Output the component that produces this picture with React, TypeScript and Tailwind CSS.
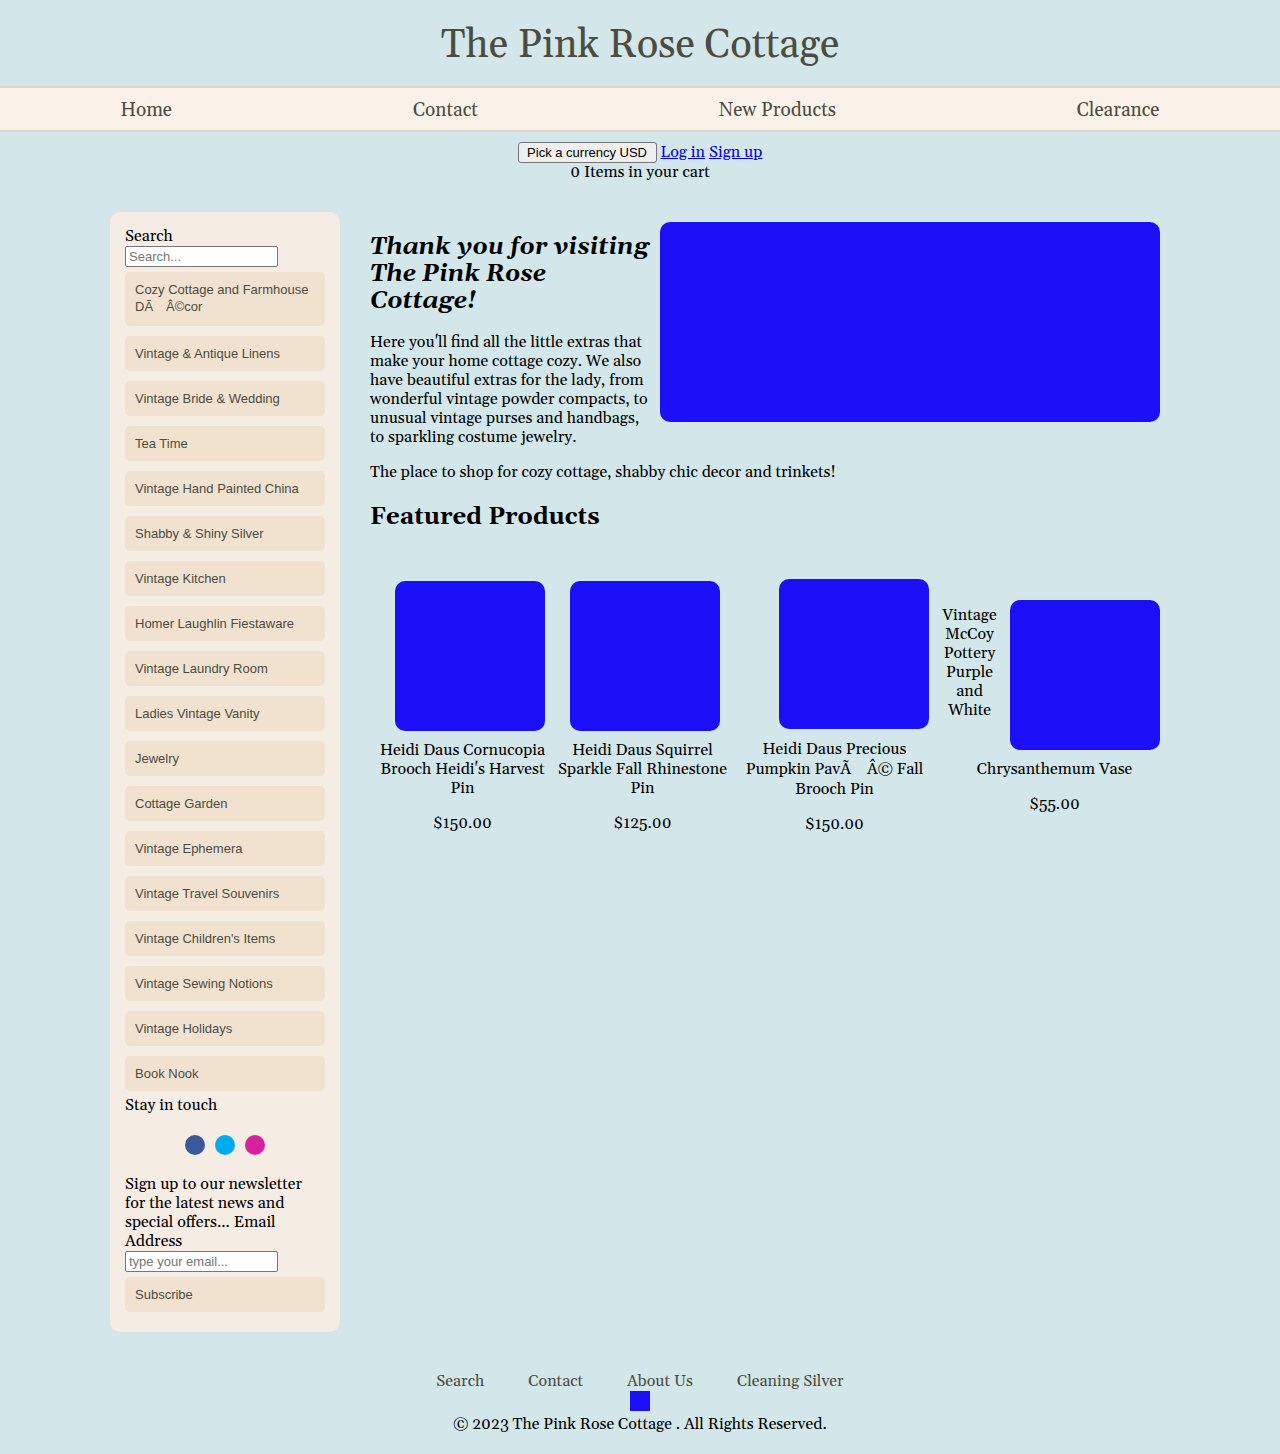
const navLinks = ["Home", "Contact", "New Products", "Clearance"];

const categories = [
  "Cozy Cottage and Farmhouse DÃ\u2003Â©cor",
  "Vintage & Antique Linens",
  "Vintage Bride & Wedding",
  "Tea Time",
  "Vintage Hand Painted China",
  "Shabby & Shiny Silver",
  "Vintage Kitchen",
  "Homer Laughlin Fiestaware",
  "Vintage Laundry Room",
  "Ladies Vintage Vanity",
  "Jewelry",
  "Cottage Garden",
  "Vintage Ephemera",
  "Vintage Travel Souvenirs",
  "Vintage Children's Items",
  "Vintage Sewing Notions",
  "Vintage Holidays",
  "Book Nook",
];

const socials = [
  { name: "Facebook", color: "bg-[#3b5998]" },
  { name: "Twitter", color: "bg-[#00acee]" },
  { name: "Instagram", color: "bg-[#d9219d]" },
];

const products = [
  {
    name: "Heidi Daus Cornucopia Brooch Heidi's Harvest Pin",
    price: "$150.00",
    leading: "leading-[19px]",
  },
  {
    name: "Heidi Daus Squirrel Sparkle Fall Rhinestone Pin",
    price: "$125.00",
    leading: "leading-[19px]",
  },
  {
    name: "Heidi Daus Precious Pumpkin PavÃ\u2003Â© Fall Brooch Pin",
    price: "$150.00",
    leading: "leading-[20px]",
  },
  {
    name: "Vintage McCoy Pottery Purple and White Chrysanthemum Vase",
    price: "$55.00",
    leading: "leading-[19px]",
  },
];

const footerLinks = ["Search", "Contact", "About Us", "Cleaning Silver"];

function PanelButton({ children, type = "button" }: { children: string; type?: "button" | "submit" }) {
  return (
    <button
      type={type}
      className="block w-full rounded-[5px] bg-[#f1e2d0] px-[10px] py-[9px] text-left font-['Liberation_Sans',Arial,sans-serif] text-[13px] leading-[17px] text-[#4d4c40]"
    >
      {children}
    </button>
  );
}

function TextField({ id, type, placeholder }: { id: string; type: string; placeholder: string }) {
  return (
    <input
      id={id}
      type={type}
      placeholder={placeholder}
      className="block h-[21px] w-[153px] rounded-[2px] border border-[#767676] bg-white px-[3px] font-['Liberation_Sans',Arial,sans-serif] text-[13px] leading-[15px] placeholder:text-[#757575]"
    />
  );
}

function Sidebar() {
  return (
    <aside className="w-[230px] shrink-0 rounded-[10px] bg-[#f5ece3] p-[15px]">
      <label htmlFor="search" className="block">
        Search
      </label>
      <TextField id="search" type="search" placeholder="Search..." />
      <div className="my-[5px] flex flex-col gap-[10px] [&>button:first-child]:pb-[11px]">
        {categories.map((c) => (
          <PanelButton key={c}>{c}</PanelButton>
        ))}
      </div>
      <p>Stay in touch</p>
      <div className="my-5 flex justify-center gap-[10px]">
        {socials.map((s) => (
          <a key={s.name} href="#" aria-label={s.name} className={`size-5 rounded-full ${s.color}`} />
        ))}
      </div>
      <form onSubmit={(e) => e.preventDefault()}>
        <label htmlFor="email" className="block">
          Sign up to our newsletter for the latest news and special offers... Email Address
        </label>
        <TextField id="email" type="email" placeholder="type your email..." />
        <div className="my-[5px]">
          <PanelButton type="submit">Subscribe</PanelButton>
        </div>
      </form>
    </aside>
  );
}

export default function App() {
  return (
    <div className="bg-[#d3e6e9] font-[Gelasio,Georgia,serif] text-[16px] leading-[19px] text-black">
      <header>
        <h1 className="pt-[23px] pb-[17px] text-center text-[40px] leading-[46px] text-[#4d4c40]">
          The Pink Rose Cottage
        </h1>
        <nav className="flex justify-around border-y-2 border-[#e1d6c7] bg-[#faf1e8] pt-[11px] pb-[9px] text-[19px] leading-[22px] text-[#4d4c40]">
          {navLinks.map((l) => (
            <a key={l} href="#">
              {l}
            </a>
          ))}
        </nav>
      </header>

      <div className="pt-[10px] pb-[30px] text-center">
        <div className="flex items-center justify-center gap-1">
          <button
            type="button"
            className="h-[21px] w-[139px] rounded-[3px] border border-[#767676] bg-[#efefef] font-['Liberation_Sans',Arial,sans-serif] text-[13px] leading-[15px]"
          >
            Pick a currency USD
          </button>
          <a href="#" className="text-[#0000ee] underline">
            Log in
          </a>
          <a href="#" className="text-[#0000ee] underline">
            Sign up
          </a>
        </div>
        <p>0 Items in your cart</p>
      </div>

      <div className="mx-auto flex max-w-[1060px] gap-[30px]">
        <Sidebar />
        <main className="min-w-0 flex-1">
          <div
            role="img"
            aria-label="The Pink Rose Cottage shop"
            className="float-right m-[10px] h-[200px] w-[500px] rounded-[10px] bg-[#1b0ff7]"
          />
          <h2 className="mt-[22px] mb-[18px] text-[24px] leading-[27px] font-bold italic">
            Thank you for visiting The Pink Rose Cottage!
          </h2>
          <p className="my-4">
            Here you'll find all the little extras that make your home cottage cozy. We also have beautiful extras for
            the lady, from wonderful vintage powder compacts, to unusual vintage purses and handbags, to sparkling
            costume jewelry.
          </p>
          <p className="my-4">The place to shop for cozy cottage, shabby chic decor and trinkets!</p>
          <h2 className="mt-[22px] mb-[18px] text-[24px] leading-[27px] font-bold">Featured Products</h2>
          <section className="grid grid-cols-[185fr_175fr_209fr_231fr] items-center py-5 text-center">
            {products.map((p) => (
              <article key={p.name} className="flow-root">
                <div
                  role="img"
                  aria-label={p.name}
                  className="float-right m-[10px] size-[150px] rounded-[10px] bg-[#1b0ff7]"
                />
                <p className={`my-4 ${p.leading}`}>{p.name}</p>
                <p className="my-4">{p.price}</p>
              </article>
            ))}
          </section>
        </main>
      </div>

      <footer className="pt-10 pb-5 text-center">
        <nav className="flex justify-center gap-11 text-[#4d4c40]">
          {footerLinks.map((l) => (
            <a key={l} href="#">
              {l}
            </a>
          ))}
        </nav>
        <div role="img" aria-label="Payment methods" className="mx-auto mb-1 size-5 bg-[#1b0ff7]" />
        <p>© 2023 The Pink Rose Cottage . All Rights Reserved.</p>
      </footer>
    </div>
  );
}
